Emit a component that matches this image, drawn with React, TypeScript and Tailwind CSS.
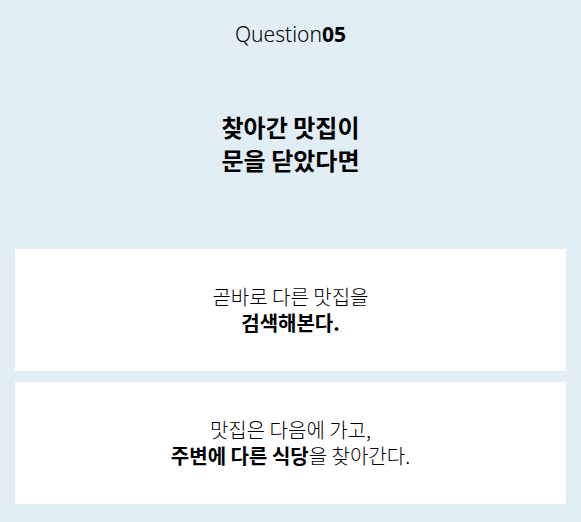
export default function App() {
  const kr = { fontFamily: '"Noto Sans CJK KR", "Noto Sans", sans-serif' };
  return (
    <div className="min-h-[522px] w-full bg-[#e1eef5] flex flex-col px-[15px] pb-[18px]" style={kr}>
      <div className="pt-[21px] text-center text-[21px] leading-[26px] text-black" style={{ fontFamily: '"Noto Sans", "Open Sans", sans-serif', fontWeight: 300 }}>
        Question<span className="font-bold">05</span>
      </div>
      <div className="mt-[63px] text-center text-[24px] leading-[33px] font-bold text-black">
        찾아간 맛집이
        <br />
        문을 닫았다면
      </div>
      <div className="mt-[73px] flex flex-col gap-[11px]">
        <div className="h-[122px] bg-white flex items-center justify-center text-center text-[20px] leading-[26px] font-light text-black">
          <p>
            곧바로 다른 맛집을
            <br />
            <b className="font-bold">검색해본다.</b>
          </p>
        </div>
        <div className="h-[122px] bg-white flex items-center justify-center text-center text-[20px] leading-[26px] font-light text-black">
          <p>
            맛집은 다음에 가고,
            <br />
            <b className="font-bold">주변에 다른 식당</b>을 찾아간다.
          </p>
        </div>
      </div>
    </div>
  );
}
